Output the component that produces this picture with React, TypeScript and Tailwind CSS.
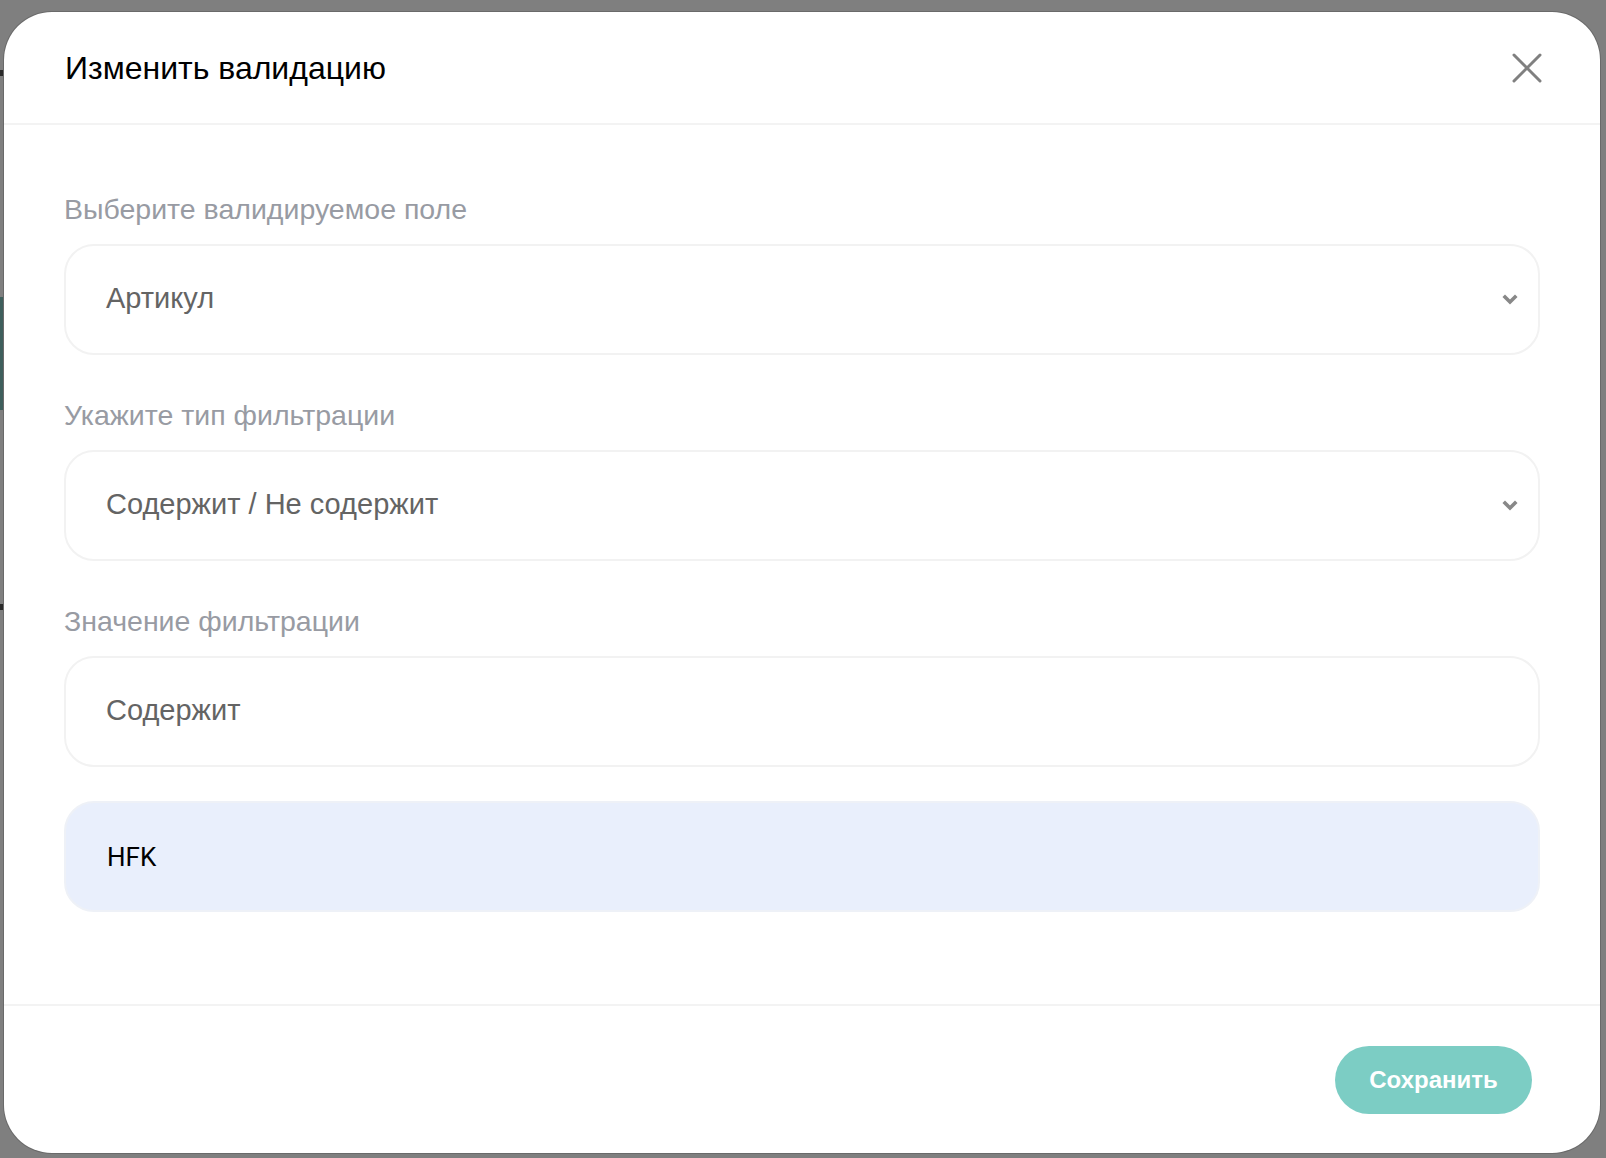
import React from "react";

function Chevron() {
  return (
    <svg width="16" height="12" viewBox="0 0 16 12" className="shrink-0">
      <polyline points="3,3 8,8 13,3" fill="none" stroke="#888888" strokeWidth="3.6" strokeLinecap="square" strokeLinejoin="miter" />
    </svg>
  );
}

function CloseIcon() {
  return (
    <svg width="30" height="30" viewBox="0 0 30 30">
      <line x1="2" y1="2" x2="28" y2="28" stroke="#808080" strokeWidth="3" strokeLinecap="round" />
      <line x1="28" y1="2" x2="2" y2="28" stroke="#808080" strokeWidth="3" strokeLinecap="round" />
    </svg>
  );
}

function Field({ label, value, select }: { label: string; value: string; select?: boolean }) {
  return (
    <div className="flex flex-col">
      <div className="text-[28.5px] leading-[34px] text-[#989ba3] mb-[18px]">{label}</div>
      <div className="h-[111px] rounded-[30px] border-2 border-[#f2f2f2] bg-white flex items-center justify-between pl-[40px] pr-[20px]">
        <span className="text-[29px] leading-[34px] text-[#646464] pb-[3px]">{value}</span>
        {select && <Chevron />}
      </div>
    </div>
  );
}

export default function App() {
  return (
    <div
      className="relative w-full h-[1158px] bg-[#7f7f7f] overflow-hidden pt-[12px] pl-[4px] pr-[6px] pb-[5px] flex"
      style={{ fontFamily: '"Liberation Sans", Arial, sans-serif' }}
    >
      <div className="absolute left-0 top-[297px] w-[4px] h-[113px] bg-[#3e5f5c]" />
      <div className="absolute left-0 top-[604px] w-[3px] h-[6px] bg-[#2a2a2a]" />
      <div className="absolute left-0 top-[70px] w-[3px] h-[6px] bg-[#2a2a2a]" />
      <div className="relative flex-1 bg-white rounded-[48px] flex flex-col shadow-[0_0_0_1px_#6a6a6a]">
        <div className="h-[113px] shrink-0 flex items-center justify-between pl-[61px] pr-[58px] border-b-2 border-[#f3f3f3]">
          <h1 className="text-[32px] leading-[38px] text-black font-normal">Изменить валидацию</h1>
          <CloseIcon />
        </div>
        <div className="flex-1 flex flex-col px-[60px] pt-[67px]">
          <div className="flex flex-col gap-[43px]">
            <Field label="Выберите валидируемое поле" value="Артикул" select />
            <Field label="Укажите тип фильтрации" value="Содержит / Не содержит" select />
            <Field label="Значение фильтрации" value="Содержит" />
          </div>
          <div className="mt-[34px] h-[111px] rounded-[30px] border-2 border-[#eef1f7] bg-[#e9effc] flex items-center pl-[41px]">
            <span className="text-[26px] leading-[34px] text-black" style={{ fontFamily: "Roboto, sans-serif" }}>HFK</span>
          </div>
        </div>
        <div className="h-[149px] shrink-0 border-t-2 border-[#f3f3f3] flex items-center justify-end pr-[68px]">
          <button className="w-[197px] h-[68px] rounded-full bg-[#7ccdc4] text-white font-bold text-[24px] leading-[32px]">
            Сохранить
          </button>
        </div>
      </div>
    </div>
  );
}
